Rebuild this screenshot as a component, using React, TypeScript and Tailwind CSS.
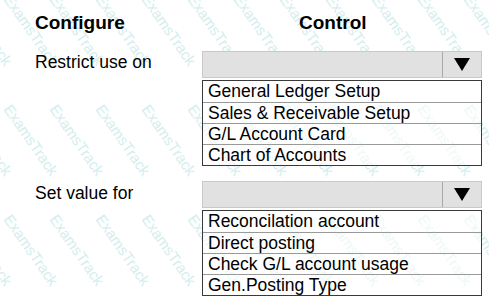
import React from 'react';

const sections = [
  {
    label: 'Restrict use on',
    options: ['General Ledger Setup', 'Sales & Receivable Setup', 'G/L Account Card', 'Chart of Accounts']
  },
  {
    label: 'Set value for',
    options: ['Reconcilation account', 'Direct posting', 'Check G/L account usage', 'Gen.Posting Type']
  }
];

// faint diagonal watermark grid
const marks: { x: number; y: number }[] = [];
for (let r = 0; r < 4; r++) {
  for (let c = 0; c < 13; c++) {
    marks.push({ x: -30 + c * 46, y: -10 + r * 110 });
  }
}

const Dropdown = ({ options }: { options: string[] }) => (
  <div className="w-[280px] flex flex-col">
    <div className="h-[27px] flex bg-[#e1e1e1] border border-[#c9c9c9]">
      <div className="flex-1 border-r border-[#a9a9a9]" />
      <div className="w-[38px] flex items-center justify-center">
        <svg width="16" height="13" viewBox="0 0 16 13">
          <polygon points="0,0 16,0 8,13" fill="#000" />
        </svg>
      </div>
    </div>
    <div className="mt-[2px] border border-[#3a3a3a] bg-white/60">
      {options.map((opt, i) => (
        <div
          key={i}
          className={`h-[21px] leading-[21px] pl-[5px] ${i > 0 ? 'border-t border-[#9a9a9a]' : ''}`}
        >
          {opt}
        </div>
      ))}
    </div>
  </div>
);

const App = () => {
  return (
    <div
      className="relative w-[489px] h-[308px] overflow-hidden bg-white text-black"
      style={{ fontFamily: '"Liberation Sans", Arial, sans-serif' }}
    >
      <div aria-hidden="true" className="absolute inset-0 pointer-events-none select-none">
        {marks.map((m, i) => (
          <span
            key={i}
            className="absolute text-[15px] text-[#d4eeee] whitespace-nowrap origin-top-left rotate-[55deg]"
            style={{ left: m.x, top: m.y }}
          >
            ExamsTrack
          </span>
        ))}
      </div>

      <div className="relative flex flex-col pt-[13px] pl-[35px]">
        <div className="flex h-[20px] leading-[20px] text-[19px] font-bold">
          <div className="w-[167px]">Configure</div>
          <div className="w-[280px] pl-[97px]">Control</div>
        </div>

        <div className="flex flex-col gap-[15px] mt-[18px] text-[17.5px]">
          {sections.map((s, i) => (
            <div key={i} className="flex items-start">
              <div className={`w-[167px] leading-[20px] ${i === 1 ? 'mt-[2px]' : 'mt-[1px]'}`}>{s.label}</div>
              <Dropdown options={s.options} />
            </div>
          ))}
        </div>
      </div>
    </div>
  );
};

export default App;
